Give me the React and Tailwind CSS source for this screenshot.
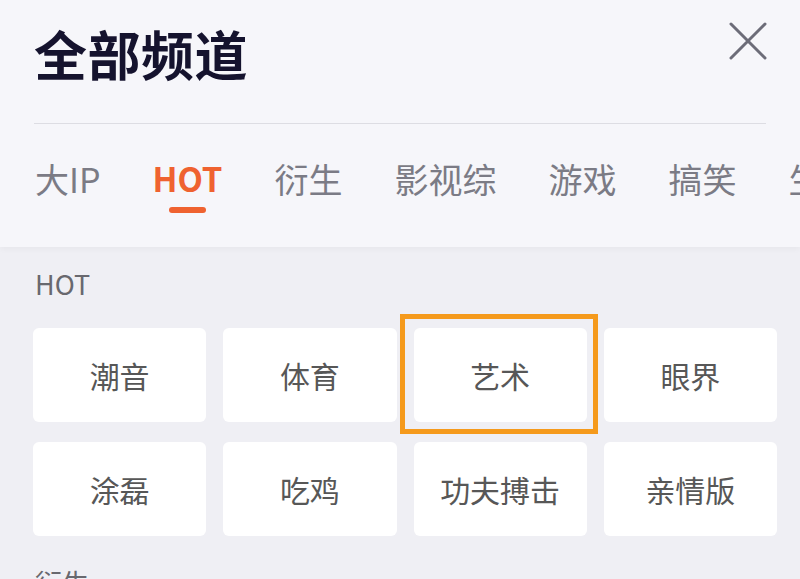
const tabs = ["大IP", "HOT", "衍生", "影视综", "游戏", "搞笑", "生活"];

const hotItems = ["潮音", "体育", "艺术", "眼界", "涂磊", "吃鸡", "功夫搏击", "亲情版"];

const font = { fontFamily: '"Noto Sans CJK SC", "Noto Sans", sans-serif' };

export default function App() {
  return (
    <div className="w-[800px] h-[579px] overflow-hidden bg-[#efeff4]" style={font}>
      {/* header */}
      <div className="relative z-10 bg-[#f6f6fa] shadow-[0_2px_6px_rgba(0,0,0,0.04)]">
        <div className="flex items-start justify-between pl-[34px] pr-[33px] pt-[22px]">
          <h1 className="mt-[5px] text-[53px] leading-none font-bold text-[#15132e] tracking-[0.5px]">
            全部频道
          </h1>
          <button className="w-[38px] h-[38px] text-[#6c6c78]">
            <svg viewBox="0 0 38 38" className="w-[38px] h-[38px]">
              <path
                d="M2 2 L36 36 M36 2 L2 36"
                stroke="currentColor"
                strokeWidth="3"
                strokeLinecap="round"
                fill="none"
              />
            </svg>
          </button>
        </div>
        <div className="mt-[43px] ml-[34px] mr-[34px] h-px bg-[#dddde3]" />
        <div className="flex gap-[52px] pl-[35px] pt-[38px] h-[123px] whitespace-nowrap">
          {tabs.map((t) => (
            <div key={t} className="flex flex-col items-center shrink-0">
              <span
                className={
                  t === "HOT"
                    ? "text-[33px] leading-none font-bold text-[#ef6230]"
                    : "text-[34px] leading-none text-[#7b7b85]"
                }
              >
                {t}
              </span>
              {t === "HOT" && (
                <span className="mt-[12px] w-[37px] h-[6px] rounded-full bg-[#ef6230]" />
              )}
            </div>
          ))}
        </div>
      </div>

      {/* HOT section */}
      <div className="pl-[33px] pr-[23px] pt-[23px]">
        <div className="pl-[2px] text-[27px] leading-none text-[#68686e]">HOT</div>
        <div className="mt-[31px] grid grid-cols-4 gap-x-[17px] gap-y-[20px]">
          {hotItems.map((item) => (
            <div
              key={item}
              className="relative h-[94px] rounded-[6px] bg-white flex items-center justify-center text-[30px] text-[#575757]"
            >
              {item}
              {item === "艺术" && (
                <span className="absolute -left-[14px] -right-[11px] -top-[14px] -bottom-[12px] border-[5px] border-[#f59a1c]" />
              )}
            </div>
          ))}
        </div>
        <div className="mt-[33px] pl-[2px] text-[27px] leading-none text-[#68686e]">衍生</div>
      </div>
    </div>
  );
}
